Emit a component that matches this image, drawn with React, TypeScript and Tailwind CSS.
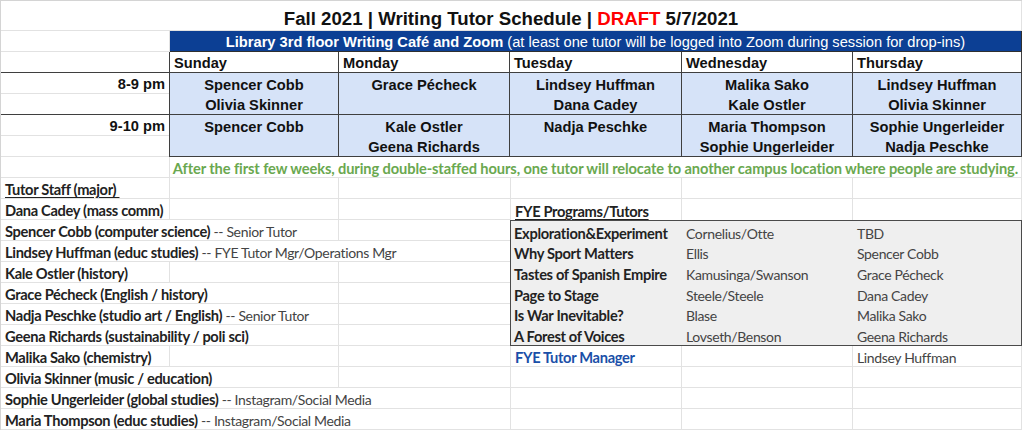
import React from "react";

const arial = "font-['Liberation_Sans',Arial,sans-serif]";
const calibri = "font-['Lato',sans-serif]";

// column widths (px), borders included
const W = { A: "w-[169px]", B: "w-[169px]", C: "w-[171px]", D: "w-[172px]", E: "w-[171px]", F: "w-[169px]" };

const days = [
  { name: "Sunday", w: W.B },
  { name: "Monday", w: W.C },
  { name: "Tuesday", w: W.D },
  { name: "Wednesday", w: W.E },
  { name: "Thursday", w: W.F },
];

const slots = [
  {
    label: "8-9 pm",
    names: [
      ["Spencer Cobb", "Olivia Skinner"],
      ["Grace Pécheck"],
      ["Lindsey Huffman", "Dana Cadey"],
      ["Malika Sako", "Kale Ostler"],
      ["Lindsey Huffman", "Olivia Skinner"],
    ],
    lastLine: "border-[#3f3f3f]",
  },
  {
    label: "9-10 pm",
    names: [
      ["Spencer Cobb"],
      ["Kale Ostler", "Geena Richards"],
      ["Nadja Peschke"],
      ["Maria Thompson", "Sophie Ungerleider"],
      ["Sophie Ungerleider", "Nadja Peschke"],
    ],
    lastLine: "border-[#e2e2e2]",
  },
];

const staff: { name: string; role?: string; span: 1 | 2 | 3 }[] = [
  { name: "Dana Cadey (mass comm)", span: 1 },
  { name: "Spencer Cobb (computer science)", role: "Senior Tutor", span: 2 },
  { name: "Lindsey Huffman (educ studies)", role: "FYE Tutor Mgr/Operations Mgr", span: 3 },
  { name: "Kale Ostler (history)", span: 1 },
  { name: "Grace Pécheck (English / history)", span: 2 },
  { name: "Nadja Peschke (studio art / English)", role: "Senior Tutor", span: 2 },
  { name: "Geena Richards (sustainability / poli sci)", span: 2 },
  { name: "Malika Sako (chemistry)", span: 1 },
  { name: "Olivia Skinner (music / education)", span: 2 },
  { name: "Sophie Ungerleider (global studies)", role: "Instagram/Social Media", span: 3 },
  { name: "Maria Thompson (educ studies)", role: "Instagram/Social Media", span: 3 },
];

const programs = [
  ["Exploration&Experiment", "Cornelius/Otte", "TBD"],
  ["Why Sport Matters", "Ellis", "Spencer Cobb"],
  ["Tastes of Spanish Empire", "Kamusinga/Swanson", "Grace Pécheck"],
  ["Page to Stage", "Steele/Steele", "Dana Cadey"],
  ["Is War Inevitable?", "Blase", "Malika Sako"],
  ["A Forest of Voices", "Lovseth/Benson", "Geena Richards"],
];

const cell = "h-[21px] shrink-0 border-b border-r border-[#e2e2e2] flex items-end leading-[17px] whitespace-nowrap";
const bold = "font-bold tracking-[-0.33px] text-[#222]";
const plain = "text-[14px] tracking-[-0.35px] text-[#444]";

function StaffRow({ children, span }: { children?: React.ReactNode; span: 1 | 2 | 3 }) {
  const first = span === 1 ? "w-[169px]" : span === 2 ? "w-[338px]" : "w-[509px] border-r-0";
  return (
    <div className="flex">
      <div className={`${cell} ${first} pl-[4px]`}>{children}</div>
      {span === 1 && <div className={`${cell} ${W.B}`} />}
      {span < 3 && <div className={`${cell} ${W.C} border-r-0`} />}
    </div>
  );
}

function RightRow({ d, e, f, noBottom }: { d?: React.ReactNode; e?: React.ReactNode; f?: React.ReactNode; noBottom?: boolean }) {
  const b = noBottom ? "border-b-0" : "";
  return (
    <div className="flex">
      <div className={`${cell} ${W.D} border-l pl-[4px] ${b}`}>{d}</div>
      <div className={`${cell} ${W.E} pl-[4px] ${b}`}>{e}</div>
      <div className={`${cell} ${W.F} pl-[4px] ${b}`}>{f}</div>
    </div>
  );
}

export default function App() {
  return (
    <div className="w-[1024px] h-[431px] bg-white overflow-hidden">
      <div className="w-[1022px] border-l border-t border-[#d4d4d4]">
        {/* title */}
        <div className={`h-[30px] border-b border-r border-[#e2e2e2] flex items-end justify-center ${arial}`}>
          <div className="text-[18.67px] font-bold leading-[23px] text-[#111]">
            Fall 2021 | Writing Tutor Schedule | <span className="text-[#ff0000]">DRAFT</span> 5/7/2021
          </div>
        </div>

        {/* location banner */}
        <div className={`flex h-[21px] ${arial}`}>
          <div className={`${cell} ${W.A}`} />
          <div className="w-[852px] h-[21px] bg-[#0c3f94] border-b border-r border-[#2f2f2f] flex items-end justify-center leading-[17px] text-white text-[14.67px] whitespace-nowrap">
            <b>Library 3rd floor Writing Café and Zoom</b>&nbsp;(at least one tutor will be logged into Zoom during session for drop-ins)
          </div>
        </div>

        {/* day headers */}
        <div className={`flex h-[21px] ${arial}`}>
          <div className={`${W.A} h-[21px] border-b border-r border-[#3f3f3f]`} />
          {days.map((d) => (
            <div
              key={d.name}
              className={`${d.w} h-[21px] border-b border-r border-[#3f3f3f] flex items-end leading-[17px] pl-[4px] text-[14.67px] font-bold text-[#111]`}
            >
              {d.name}
            </div>
          ))}
        </div>

        {/* time slots */}
        {slots.map((s) => (
          <div key={s.label} className={`flex h-[42px] ${arial}`}>
            <div className={`${W.A} border-r border-[#3f3f3f] flex flex-col`}>
              <div className="h-[21px] border-b border-[#e2e2e2] flex items-end justify-end leading-[17px] pr-[4px] text-[14.67px] font-bold text-[#111]">
                {s.label}
              </div>
              <div className={`h-[21px] border-b ${s.lastLine}`} />
            </div>
            {s.names.map((list, i) => (
              <div key={i} className={`${days[i].w} h-[42px] bg-[#d6e3f8] border-b border-r border-[#3f3f3f] flex flex-col`}>
                {list.map((n) => (
                  <div key={n} className="h-[21px] flex items-end justify-center leading-[17px] text-[14.67px] font-bold text-[#111] whitespace-nowrap">
                    {n}
                  </div>
                ))}
              </div>
            ))}
          </div>
        ))}

        {/* relocation note */}
        <div className={`flex h-[21px] ${calibri}`}>
          <div className={`${cell} ${W.A}`} />
          <div className={`${cell} w-[852px] justify-center text-[14.67px] font-bold tracking-[-0.11px] text-[#6aa84f]`}>
            After the first few weeks, during double-staffed hours, one tutor will relocate to another campus location where people are studying.
          </div>
        </div>

        {/* staff + FYE */}
        <div className={`flex text-[14.67px] ${calibri}`}>
          <div className="w-[509px] flex flex-col">
            <StaffRow span={1}>
              <span className={`${bold} underline underline-offset-2`}>Tutor Staff (major)&nbsp;</span>
            </StaffRow>
            {staff.map((p) => (
              <StaffRow key={p.name} span={p.span}>
                <span className={bold}>{p.name}</span>
                {p.role && <span className={plain}>&nbsp;-- {p.role}</span>}
              </StaffRow>
            ))}
          </div>

          <div className="w-[512px] flex flex-col">
            <RightRow />
            <RightRow
              noBottom
              d={<span className={`${bold} underline underline-offset-2`}>FYE Programs/Tutors</span>}
            />
            <div className="h-[126px] border border-[#4a4a4a] bg-[#efefef] flex flex-col justify-between">
              {programs.map((r) => (
                <div key={r[0]} className="flex h-[20.6px] items-end leading-[17px] whitespace-nowrap">
                  <div className={`w-[171px] pl-[3px] ${bold}`}>{r[0]}</div>
                  <div className={`w-[171px] pl-[4px] ${plain}`}>{r[1]}</div>
                  <div className={`w-[168px] pl-[4px] ${plain}`}>{r[2]}</div>
                </div>
              ))}
            </div>
            <RightRow
              d={<span className="font-bold tracking-[-0.33px] text-[#1a4fa8]">FYE Tutor Manager</span>}
              f={<span className={plain}>Lindsey Huffman</span>}
            />
            <RightRow />
            <RightRow />
            <RightRow />
          </div>
        </div>
      </div>
    </div>
  );
}
